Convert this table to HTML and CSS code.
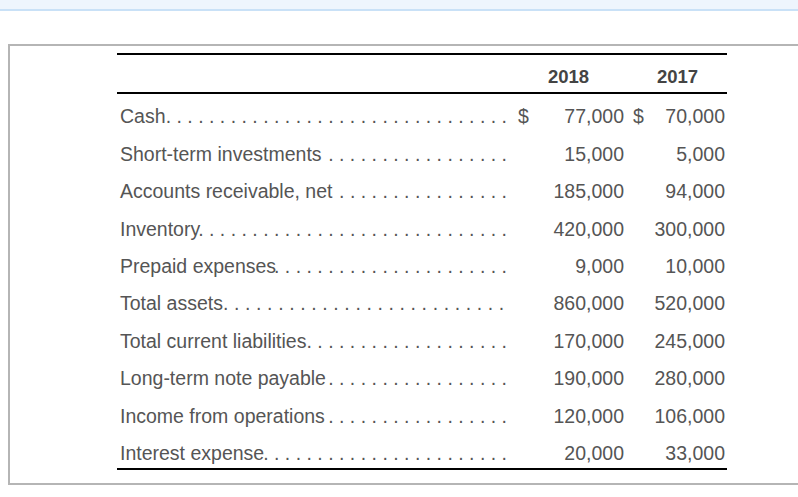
FILE: index.html
```html
<!DOCTYPE html>
<html>
<head>
<meta charset="utf-8">
<link rel="stylesheet" href="styles.css">
</head>
<body>
<div class="topbar"></div>
<div class="panel">
  <table class="fin">
    <colgroup>
      <col class="c-label"><col class="c-cur1"><col class="c-num1"><col class="c-cur2"><col class="c-num2">
    </colgroup>
    <thead>
      <tr><th></th><th colspan="2">2018</th><th colspan="2">2017</th></tr>
    </thead>
    <tbody>
      <tr><td class="label"><div class="lab"><span class="name">Cash</span><span class="dots">. . . . . . . . . . . . . . . . . . . . . . . . . . . . . . . .</span></div></td><td class="cur1">$</td><td class="num1">77,000</td><td class="cur2">$</td><td class="num2">70,000</td></tr>
      <tr><td class="label"><div class="lab"><span class="name">Short-term investments</span><span class="dots">. . . . . . . . . . . . . . . . .</span></div></td><td class="cur1"></td><td class="num1">15,000</td><td class="cur2"></td><td class="num2">5,000</td></tr>
      <tr><td class="label"><div class="lab"><span class="name">Accounts receivable, net</span><span class="dots">. . . . . . . . . . . . . . . .</span></div></td><td class="cur1"></td><td class="num1">185,000</td><td class="cur2"></td><td class="num2">94,000</td></tr>
      <tr><td class="label"><div class="lab"><span class="name">Inventory</span><span class="dots">. . . . . . . . . . . . . . . . . . . . . . . . . . . . .</span></div></td><td class="cur1"></td><td class="num1">420,000</td><td class="cur2"></td><td class="num2">300,000</td></tr>
      <tr><td class="label"><div class="lab"><span class="name">Prepaid expenses</span><span class="dots">. . . . . . . . . . . . . . . . . . . . . .</span></div></td><td class="cur1"></td><td class="num1">9,000</td><td class="cur2"></td><td class="num2">10,000</td></tr>
      <tr><td class="label"><div class="lab"><span class="name">Total assets</span><span class="dots wide">. . . . . . . . . . . . . . . . . . . . . . . . . .</span></div></td><td class="cur1"></td><td class="num1">860,000</td><td class="cur2"></td><td class="num2">520,000</td></tr>
      <tr><td class="label"><div class="lab"><span class="name">Total current liabilities</span><span class="dots">. . . . . . . . . . . . . . . . . . .</span></div></td><td class="cur1"></td><td class="num1">170,000</td><td class="cur2"></td><td class="num2">245,000</td></tr>
      <tr><td class="label"><div class="lab"><span class="name">Long-term note payable</span><span class="dots">. . . . . . . . . . . . . . . . .</span></div></td><td class="cur1"></td><td class="num1">190,000</td><td class="cur2"></td><td class="num2">280,000</td></tr>
      <tr><td class="label"><div class="lab"><span class="name">Income from operations</span><span class="dots">. . . . . . . . . . . . . . . . .</span></div></td><td class="cur1"></td><td class="num1">120,000</td><td class="cur2"></td><td class="num2">106,000</td></tr>
      <tr class="last"><td class="label"><div class="lab"><span class="name">Interest expense</span><span class="dots">. . . . . . . . . . . . . . . . . . . . . . .</span></div></td><td class="cur1"></td><td class="num1">20,000</td><td class="cur2"></td><td class="num2">33,000</td></tr>
    </tbody>
  </table>
</div>
</body>
</html>
```

FILE: styles.css
```css
html, body {
  margin: 0;
  padding: 0;
  background: #ffffff;
}

body {
  font-family: "Liberation Sans", Arial, sans-serif;
  color: #555555;
}

.topbar {
  height: 9px;
  background: #eef5fd;
  border-bottom: 2px solid #c9e1f7;
}

.panel {
  margin-top: 33px;
  margin-left: 8px;
  border: 2px solid #b5b5b5;
  border-right: none;
  padding-top: 7px;
  padding-bottom: 13px;
}

.fin {
  margin-left: 107px;
  width: 610px;
  table-layout: fixed;
  border-collapse: separate;
  border-spacing: 0;
}

.c-label { width: 392px; }
.c-cur1 { width: 22px; }
.c-num1 { width: 97px; }
.c-cur2 { width: 20px; }
.c-num2 { width: 79px; }

.fin th {
  font-size: 18.5px;
  font-weight: bold;
  color: #444444;
  line-height: 21px;
  padding: 11px 0 5px 0;
  border-top: 2px solid #000000;
  border-bottom: 2px solid #000000;
  text-align: center;
}

.fin td {
  font-size: 19.5px;
  line-height: 22px;
  height: 22px;
  padding: 11.4px 0 4px 0;
  white-space: nowrap;
  vertical-align: top;
}

.fin tr.last td {
  border-bottom: 2px solid #000000;
}

.fin td.label {
  padding-left: 3px;
  padding-right: 2px;
}

.lab {
  display: flex;
  width: 387px;
}

.name {
  flex: none;
}

.dots {
  flex: 1 1 auto;
  min-width: 0;
  direction: rtl;
  text-align: right;
  white-space: nowrap;
}

.dots.wide {
  direction: ltr;
  text-align: left;
  word-spacing: 0.2px;
}

.fin td.cur1 {
  padding-left: 9px;
}

.fin td.cur2 {
  padding-left: 5px;
}

.fin td.num1 {
  text-align: right;
  padding-right: 4px;
}

.fin td.num2 {
  text-align: right;
  padding-right: 2px;
}
```
